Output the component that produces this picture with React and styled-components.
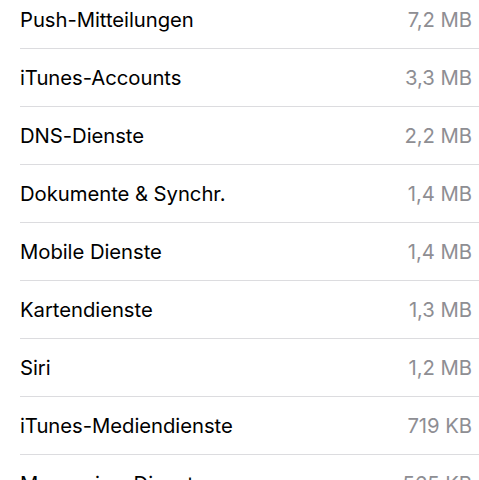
import React from "react";
import styled, { createGlobalStyle } from "styled-components";

const Global = createGlobalStyle`
  html, body { margin: 0; padding: 0; background: #fff; }
  body { font-family: "Inter", "Roboto", "Liberation Sans", sans-serif; }
`;

const Page = styled.div`
  width: 479px;
  height: 480px;
  overflow: hidden;
  background: #fff;
`;

const List = styled.ul`
  list-style: none;
  margin: -9px 0 0 0;
  padding: 0 0 0 20px;
`;

const Row = styled.li`
  display: flex;
  align-items: center;
  justify-content: space-between;
  height: 57px;
  padding-right: 7px;
  border-bottom: 1px solid #dcdcdf;
`;

const Label = styled.span`
  font-size: 20.3px;
  color: #000;
  letter-spacing: -0.05px;
`;

const Size = styled.span`
  font-size: 20.3px;
  color: #8e8e93;
  letter-spacing: -0.05px;
`;

const items = [
  ["Push-Mitteilungen", "7,2 MB"],
  ["iTunes-Accounts", "3,3 MB"],
  ["DNS-Dienste", "2,2 MB"],
  ["Dokumente & Synchr.", "1,4 MB"],
  ["Mobile Dienste", "1,4 MB"],
  ["Kartendienste", "1,3 MB"],
  ["Siri", "1,2 MB"],
  ["iTunes-Mediendienste", "719 KB"],
  ["Messaging-Dienste", "565 KB"],
];

export default function App() {
  return (
    <Page>
      <Global />
      <List>
        {items.map(([l, s]) => (
          <Row key={l}>
            <Label>{l}</Label>
            <Size>{s}</Size>
          </Row>
        ))}
      </List>
    </Page>
  );
}
